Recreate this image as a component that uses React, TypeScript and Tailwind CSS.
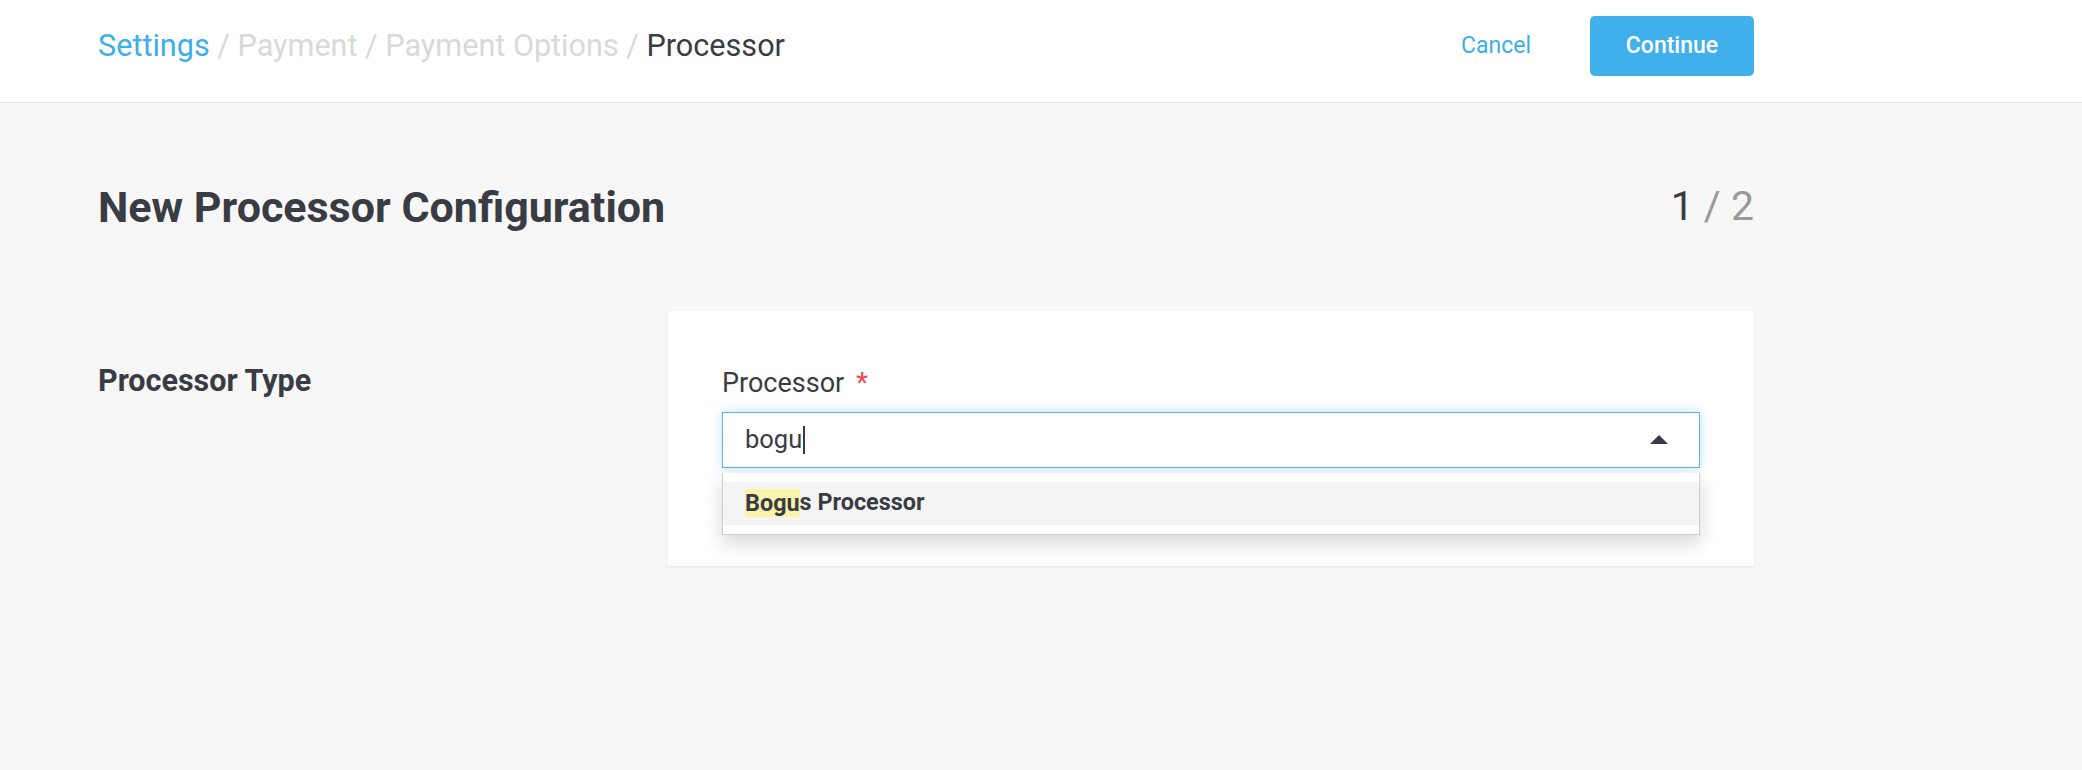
import type { FC } from "react"

const font = { fontFamily: "Roboto, 'Noto Sans', sans-serif" }

const Header: FC = () => {
  return (
    <div className="h-[103px] bg-white border-b border-[#e8e8e8]">
      <div className="ml-[98px] w-[1656px] h-[92px] flex items-center justify-between">
        {/* breadcrumb */}
        <div className="text-[30.6px] leading-none text-[#d9d9d9]">
          <span className="text-[#3daeea]">Settings</span>
          <span> / Payment / Payment Options / </span>
          <span className="text-[#393c43]">Processor</span>
        </div>
        <div className="flex items-center">
          <button className="text-[23px] text-[#3daeea] mr-[59px]">Cancel</button>
          <button className="w-[164px] h-[60px] rounded-[5px] bg-[#40b0ec] text-white text-[23px] font-medium">
            Continue
          </button>
        </div>
      </div>
    </div>
  )
}

const ProcessorSelect: FC = () => {
  return (
    <div className="relative">
      <div className="h-[56px] border border-[#5fb3ec] bg-white shadow-[0_0_10px_rgba(61,174,234,0.35)] flex items-center justify-between pl-[22px] pr-[31px]">
        <div className="flex items-center text-[25.5px] text-[#393c43]">
          <span>bogu</span>
          <span className="w-[2px] h-[28px] bg-[#393c43] ml-[1px]" />
        </div>
        <svg width="18" height="9" viewBox="0 0 18 9">
          <polygon points="9,0 18,9 0,9" fill="#393c43" />
        </svg>
      </div>

      {/* dropdown */}
      <div className="absolute left-0 right-0 top-[61px] bg-white border-x border-b border-[#cccccc] shadow-[0_8px_18px_rgba(0,0,0,0.16)] py-[9px]">
        <div className="h-[43px] bg-[#f4f4f4] flex items-center pl-[22px] text-[23.4px] font-bold text-[#393c43]">
          <span className="bg-[#faf3ab] leading-[28px]">Bogu</span>
          <span>s Processor</span>
        </div>
      </div>
    </div>
  )
}

export default function App() {
  return (
    <div className="min-h-[770px] bg-[#f7f7f7]" style={font}>
      <Header />

      <div className="ml-[98px] w-[1656px]">
        <div className="h-[208px] flex items-center justify-between">
          <h1 className="text-[43px] font-bold text-[#393c43]">New Processor Configuration</h1>
          <div className="text-[41px] text-[#393c43]">
            1 <span className="text-[#999999]">/ 2</span>
          </div>
        </div>

        <div className="flex">
          <div className="w-[570px] pt-[47px] text-[30.5px] font-bold text-[#393c43]">Processor Type</div>

          <div className="flex-1 bg-white shadow-[0_1px_2px_rgba(0,0,0,0.08)] px-[54px] pt-[52px] pb-[98px]">
            <div className="flex items-center text-[27px] text-[#393c43] mb-[8px]">
              Processor
              <span className="text-[#f0484a] ml-[12px]">*</span>
            </div>
            <ProcessorSelect />
          </div>
        </div>
      </div>
    </div>
  )
}
